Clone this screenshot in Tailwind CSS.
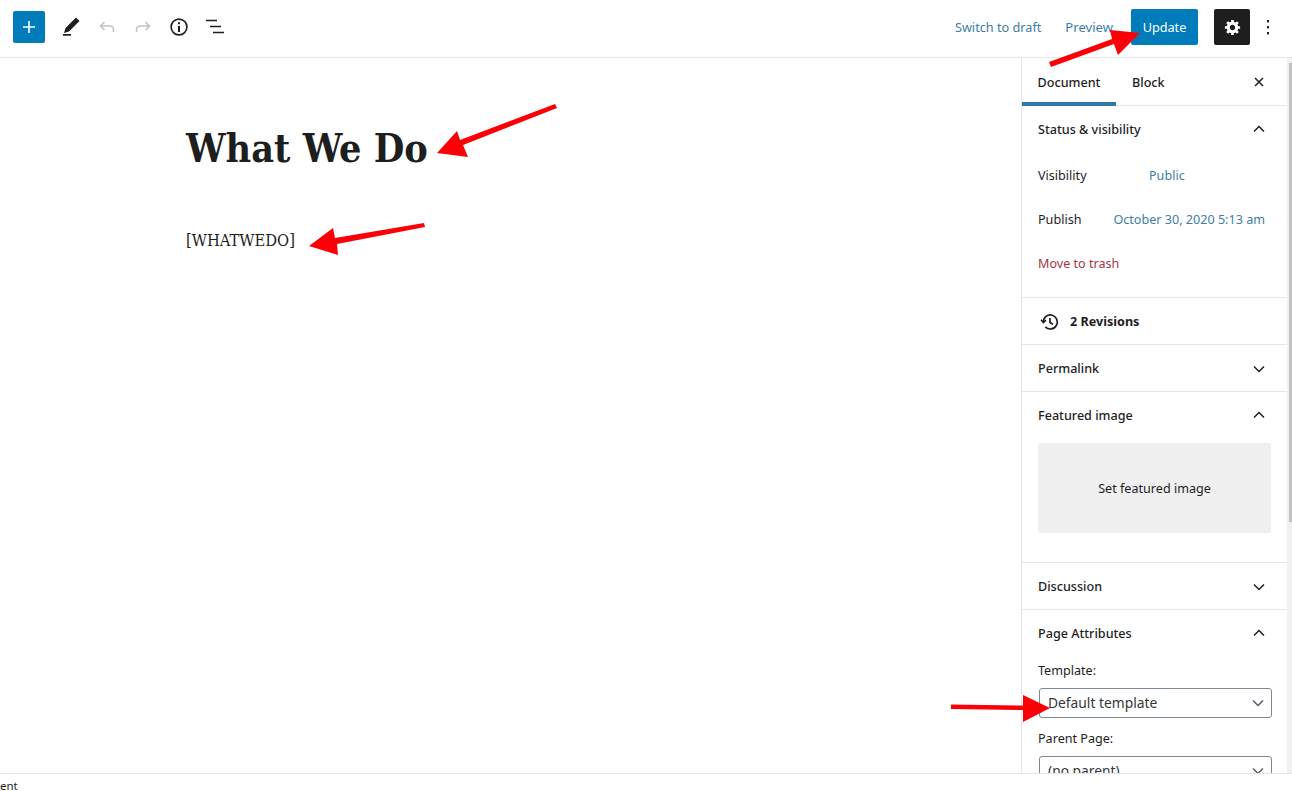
<!DOCTYPE html>
<html lang="en">
<head>
    <meta charset="UTF-8">
    <title>Edit Page</title>
    <script src="https://cdn.jsdelivr.net/npm/@tailwindcss/browser@4"></script>
</head>
<body class="bg-white h-[791px] w-[1292px] overflow-hidden relative flex flex-col font-['Noto_Sans',sans-serif] text-[12.6px] text-[#1e1e1e]">

    <!-- Top toolbar -->
    <header class="h-[58px] shrink-0 border-b border-[#e6e6e6] flex items-center pl-[13px] pr-[16px] pb-[3px]">
        <button class="w-[32px] h-[32px] rounded-[2px] bg-[#007cba] flex items-center justify-center">
            <svg width="16" height="16" viewBox="0 0 16 16"><path d="M8 2v12M2 8h12" stroke="#fff" stroke-width="1.6" fill="none"/></svg>
        </button>
        <svg class="ml-[14px]" width="24" height="24" viewBox="0 0 24 24" fill="#1e1e1e"><path d="M17 2.500l3.500 3.500L10 16.500l-5 1.500 1.500-5z"/><rect x="4" y="19" width="8" height="1.700"/></svg>
        <svg class="ml-[12px]" width="24" height="24" viewBox="0 0 24 24" fill="none" stroke="#c4c4c4" stroke-width="1.6"><path d="M9.5 7L5.5 11l4 4M5.5 11h9c2.5 0 4 1.5 4 4v2"/></svg>
        <svg class="ml-[12px]" width="24" height="24" viewBox="0 0 24 24" fill="none" stroke="#c4c4c4" stroke-width="1.6"><path d="M14.5 7l4 4-4 4M18.5 11h-9c-2.5 0-4 1.5-4 4v2"/></svg>
        <svg class="ml-[12px]" width="24" height="24" viewBox="0 0 24 24" fill="none" stroke="#1e1e1e"><circle cx="12" cy="12" r="7.9" stroke-width="1.6"/><path d="M12 11v6" stroke-width="2"/><path d="M12 7.2v2" stroke-width="2"/></svg>
        <svg class="ml-[12px]" width="24" height="24" viewBox="0 0 24 24" fill="none" stroke="#1e1e1e" stroke-width="1.6"><path d="M3 5.500h11M7 11.500h11M10 17.500h11"/></svg>

        <div class="ml-auto flex items-center text-[12.7px]">
            <span class="pt-[2px] text-[#3d7ea6]">Switch to draft</span>
            <span class="ml-[24px] pt-[2px] text-[13.100px] text-[#3d7ea6]">Preview</span>
            <button class="ml-[18px] w-[67px] h-[36px] pt-[2px] rounded-[2px] bg-[#007cba] text-white">Update</button>
            <button class="ml-[16px] w-[36px] h-[36px] rounded-[2px] bg-[#1e1e1e] flex items-center justify-center">
                <svg width="17" height="17" viewBox="0 1 19 19" fill="#fff"><path fill-rule="evenodd" d="M18 12h-2.180c-.170.700-.440 1.350-.810 1.930l1.540 1.540-2.100 2.100-1.540-1.540c-.580.360-1.230.640-1.910.810V19H8v-2.180c-.680-.170-1.330-.440-1.910-.810l-1.540 1.540-2.120-2.120 1.540-1.540c-.360-.580-.630-1.230-.800-1.910H1V9h2.170c.170-.700.440-1.350.810-1.930L2.430 5.530l2.100-2.100 1.540 1.540c.580-.370 1.230-.640 1.930-.810V2h3v2.180c.680.170 1.330.440 1.910.810l1.540-1.540 2.120 2.120-1.540 1.540c.360.580.630 1.230.800 1.910H18V12zm-8.500 1.500c1.660 0 3-1.340 3-3s-1.340-3-3-3-3 1.340-3 3 1.340 3 3 3z"/></svg>
            </button>
            <svg class="ml-[10px]" width="16" height="20" viewBox="0 0 16 20" fill="#1e1e1e"><rect x="7" y="3" width="2" height="2.400"/><rect x="7" y="9" width="2" height="2.400"/><rect x="7" y="15" width="2" height="2.400"/></svg>
        </div>
    </header>

    <div class="flex-1 min-h-0 flex">
        <!-- Editor canvas -->
        <main class="flex-1 pl-[186px] pt-[65px] text-[#1e1e1e] font-['DejaVu_Serif',serif] font-stretch-condensed">
            <h1 class="font-bold text-[39.200px] leading-[50px]">What We Do</h1>
            <p class="mt-[56px] text-[16.400px] leading-[24px]">[WHATWEDO]</p>
        </main>

        <!-- Settings sidebar -->
        <aside class="w-[266px] shrink-0 border-l border-[#e6e6e6] overflow-hidden">
            <div class="h-[48px] flex items-center border-b border-[#e6e6e6] font-medium">
                <div class="w-[94px] h-[48px] flex items-center justify-center border-b-[4px] border-[#2b7ba8] pt-[8px]">Document</div>
                <div class="ml-[16px] pt-[4px]">Block</div>
                <svg class="ml-auto mr-[22px]" width="12" height="12" viewBox="0 0 12 12" stroke="#1e1e1e" stroke-width="1.500" fill="none"><path d="M2 2l8 8M10 2l-8 8"/></svg>
            </div>

            <section class="h-[192px] border-b border-[#e6e6e6] px-[16px]">
                <div class="h-[47px] flex items-center justify-between font-medium pr-[6px]">
                    <span class="pt-[2px]">Status &amp; visibility</span>
                    <svg class="-mt-[2px]" width="12" height="8" viewBox="0 0 12 8" fill="none" stroke="#1e1e1e" stroke-width="1.500"><path d="M1 6.500l5-5 5 5"/></svg>
                </div>
                <div class="h-[44px] pt-[2px] flex items-center"><span class="w-[111px]">Visibility</span><span class="text-[#3d7ea6]">Public</span></div>
                <div class="h-[44px] pt-[2px] flex items-center justify-between pr-[6px]"><span>Publish</span><span class="text-[#3d7ea6]">October 30, 2020 5:13 am</span></div>
                <div class="h-[44px] pt-[2px] flex items-center text-[#a8353f]">Move to trash</div>
            </section>

            <section class="h-[47px] pt-[2px] border-b border-[#e6e6e6] pl-[18px] flex items-center font-bold">
                <svg width="20" height="20" viewBox="0 0 20 20" fill="none" stroke="#1e1e1e" stroke-width="1.700"><path d="M3.300 10a7 7 0 112 4.900"/><path d="M1 7.800l2.300 2.800 2.700-2.500" stroke-width="1.500"/><path d="M10 6v4.500l3 1.800"/></svg>
                <span class="ml-[10px]">2 Revisions</span>
            </section>

            <section class="h-[47px] pt-[2px] border-b border-[#e6e6e6] pl-[16px] pr-[22px] flex items-center justify-between font-medium">
                <span>Permalink</span>
                <svg width="12" height="8" viewBox="0 0 12 8" fill="none" stroke="#1e1e1e" stroke-width="1.500"><path d="M1 1.500l5 5 5-5"/></svg>
            </section>

            <section class="h-[171px] border-b border-[#e6e6e6] px-[16px]">
                <div class="h-[47px] flex items-center justify-between font-medium pr-[6px]">
                    <span class="pt-[2px]">Featured image</span>
                    <svg class="-mt-[2px]" width="12" height="8" viewBox="0 0 12 8" fill="none" stroke="#1e1e1e" stroke-width="1.500"><path d="M1 6.500l5-5 5 5"/></svg>
                </div>
                <div class="mt-[4px] h-[90px] pt-[2px] rounded-[2px] bg-[#f0f0f0] flex items-center justify-center">Set featured image</div>
            </section>

            <section class="h-[47px] pt-[2px] border-b border-[#e6e6e6] pl-[16px] pr-[22px] flex items-center justify-between font-medium">
                <span>Discussion</span>
                <svg width="12" height="8" viewBox="0 0 12 8" fill="none" stroke="#1e1e1e" stroke-width="1.500"><path d="M1 1.500l5 5 5-5"/></svg>
            </section>

            <section class="px-[16px]">
                <div class="h-[47px] flex items-center justify-between font-medium pr-[6px]">
                    <span class="pt-[2px]">Page Attributes</span>
                    <svg class="-mt-[2px]" width="12" height="8" viewBox="0 0 12 8" fill="none" stroke="#1e1e1e" stroke-width="1.500"><path d="M1 6.500l5-5 5 5"/></svg>
                </div>
                <div class="mt-[4px] leading-[20px]">Template:</div>
                <div class="mt-[7px] ml-px -mr-px h-[30px] rounded-[3px] border border-[#7e8993] flex items-center justify-between pl-[8px] pr-[7px] text-[13.800px] text-[#32373c]">
                    <span>Default template</span>
                    <svg width="12" height="8" viewBox="0 0 12 8" fill="none" stroke="#555d66" stroke-width="1.500"><path d="M1 1.500l5 5 5-5"/></svg>
                </div>
                <div class="mt-[11px] leading-[20px]">Parent Page:</div>
                <div class="mt-[7px] ml-px -mr-px h-[30px] rounded-[3px] border border-[#7e8993] flex items-center justify-between pl-[8px] pr-[7px] text-[13.800px] text-[#32373c]">
                    <span>(no parent)</span>
                    <svg width="12" height="8" viewBox="0 0 12 8" fill="none" stroke="#555d66" stroke-width="1.500"><path d="M1 1.500l5 5 5-5"/></svg>
                </div>
            </section>
        </aside>
        <div class="w-[5px] shrink-0 bg-[#f1f1f1] pt-[5px] pl-[2px]">
            <div class="h-[459px] bg-[#c1c1c1]"></div>
        </div>
    </div>

    <!-- Breadcrumb footer -->
    <footer class="h-[18px] shrink-0 border-t border-[#e6e6e6] bg-white pt-[6px] text-[11.500px] leading-[11px] relative z-10">
        <span>ent</span>
    </footer>

    <!-- Annotation arrows -->
    <svg class="absolute inset-0 pointer-events-none z-20" width="1292" height="791" viewBox="0 0 1292 791" fill="#fb0007" stroke="none">
        <path d="M1049 62L1112 39 1110 30 1140 33 1118 55 1114 44 1051 67z"/>
        <path d="M555 104L460 140 457 131 437 153 468 157 463 145 557 108z"/>
        <path d="M424 223L335 238 333 228 309 246 338 255 337 244 425 227z"/>
        <path d="M951 704.500L1023 705.500 1023 695 1050 708 1023 722 1023 710 951 709z"/>
    </svg>
</body>
</html>
